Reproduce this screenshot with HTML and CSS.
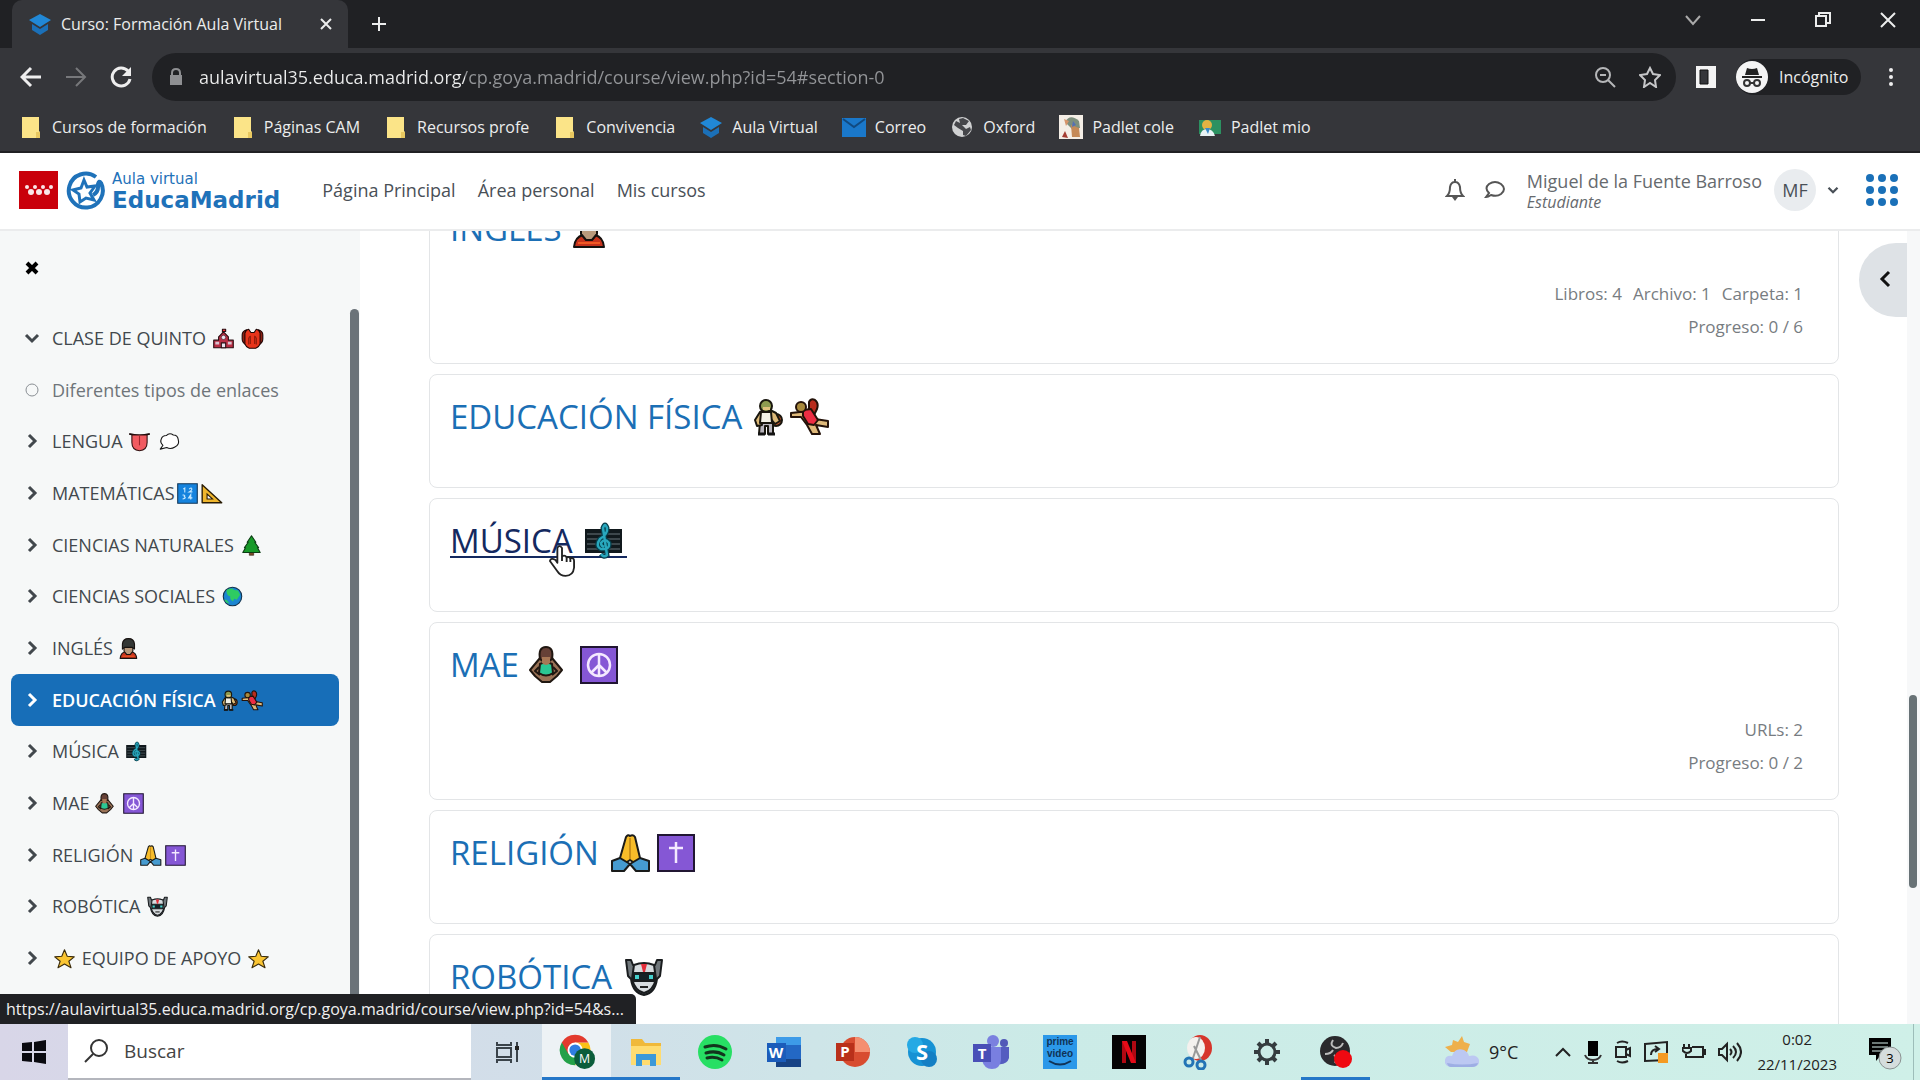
FILE: index.html
```html
<!DOCTYPE html>
<html lang="es">
<head>
<meta charset="utf-8">
<title>Curso: Formación Aula Virtual</title>
<link rel="stylesheet" href="styles.css">
</head>
<body>
<svg class="sprite" aria-hidden="true">
  <defs>
    <symbol id="e-school" viewBox="0 0 46 38"><g stroke="#2a0d12" stroke-width="2" stroke-linejoin="round"><path d="M5 36V22h9v-6l9-9 9 9v6h9v14z" fill="#b92f45"/><path d="M21 8V2h6v4h-5" fill="#e33"/><path d="M19 36v-9h8v9z" fill="#e8e4f0"/></g><circle cx="23" cy="17" r="4" fill="#e8e4f0" stroke="#2a0d12"/><path d="M8 25h7v5H8zm23 0h7v5h-7z" fill="#d9c2d0"/></symbol>
    <symbol id="e-bag" viewBox="0 0 46 38"><g stroke="#1e0505" stroke-width="2" stroke-linejoin="round"><path d="M4 12q0-6 8-9v28q-8-4-8-11zM42 12q0-6-8-9v28q8-4 8-11z" fill="#8f2113"/><path d="M9 9q2-6 7-7l4 6h6l4-6q5 1 7 7v20q-2 6-8 8H17q-6-2-8-8z" fill="#e8341b"/></g><path d="M16 30V19q1-4 3-4v14M30 30V19q-1-4-3-4v14" fill="none" stroke="#8c1a0b" stroke-width="2"/></symbol>
    <symbol id="e-tongue" viewBox="0 0 46 38"><path d="M4 5q19 5 38 0" fill="none" stroke="#1c0b0b" stroke-width="3"/><path d="M9 7h28v14q0 14-14 15Q9 35 9 21z" fill="#f15b61" stroke="#301010" stroke-width="2"/><path d="M23 9v17" stroke="#9d252c" stroke-width="2"/></symbol>
    <symbol id="e-balloon" viewBox="0 0 46 38"><path d="M6 33l5-7Q5 21 8 14q2-6 9-6 6-6 13-1 8 0 9 8 3 10-6 14-8 5-15 1z" fill="#fff" stroke="#171717" stroke-width="2" stroke-linejoin="round"/></symbol>
    <symbol id="e-numbers" viewBox="0 0 46 38"><path d="M5 1h36v36H5z" fill="#1583de" stroke="#143858" stroke-width="2"/><path d="M15 11l3-2v8M26 11q5-4 5 0 0 2-5 5h6M14 22q6-1 3 3 5 2-3 4M29 30v-9l-4 6h7" fill="none" stroke="#c7e9ff" stroke-width="2"/></symbol>
    <symbol id="e-ruler" viewBox="0 0 46 38"><path d="M4 3v33h36z" fill="#efb62d" stroke="#281b04" stroke-width="2.5" stroke-linejoin="round"/><path d="M13 20v9h10z" fill="#f7f9fa" stroke="#281b04" stroke-width="2"/></symbol>
    <symbol id="e-tree" viewBox="0 0 46 38"><path d="M19 30h8v7h-8z" fill="#7b4926" stroke="#24140a"/><path d="M23 1l8 12h-2l7 10h-2l5 9H7l5-9h-2l7-10h-2z" fill="#179a29" stroke="#0b3c13" stroke-width="2" stroke-linejoin="round"/></symbol>
    <symbol id="e-globe" viewBox="0 0 46 38"><circle cx="23" cy="19" r="17" fill="#1b86d1" stroke="#10314d" stroke-width="2"/><path d="M12 7q10-5 14 0l7 1 4 8-6 9-5-2-2 5q-7-4-5-9-8-2-7-12z" fill="#2ecb62"/><path d="M8 24q6 1 9 8-7-1-9-8z" fill="#2ecb62"/></symbol>
    <symbol id="e-guard" viewBox="4 0 40 38"><g stroke="#16110f" stroke-width="2" stroke-linejoin="round"><path d="M8 37q1-10 9-12h12q8 2 9 12z" fill="#c7331d"/><path d="M15 17h16v7l-5 6h-6l-5-6z" fill="#b9997b"/><path d="M12 20V11Q13 1 23 1t11 10v9l-4-3H16z" fill="#333735"/></g><path d="M12 33h22" stroke="#f15a25" stroke-width="2"/></symbol>
    <symbol id="e-ballman" viewBox="6 0 36 38"><g stroke="#19160e" stroke-width="2" stroke-linejoin="round"><circle cx="31" cy="22" r="6" fill="#c4532a"/><path d="M15 24h13v12h-5v-8h-3v8h-6z" fill="#b8b4bc"/><path d="M15 14l5-2h5l6 3 4 8-5 3-4-5v4H16v-4l1 6-5 1-2-6z" fill="#dcb978"/><path d="M16 14h10l1 11H15z" fill="#f3f1e6"/><circle cx="21" cy="8" r="6" fill="#8d9a50"/></g><path d="M18 9h7v3h-7z" fill="#e0c07c"/><path d="M13 36h7m3 0h7" stroke="#151515" stroke-width="3"/></symbol>
    <symbol id="e-handball" viewBox="0 0 46 38"><g stroke="#241209" stroke-width="2" stroke-linejoin="round"><path d="M22 12l0-8q2-4 6-2 4 3 2 9l-3 6z" fill="#b92c1d"/><path d="M4 15l9-1 8-2 7 9 13 2v6l-12-2 4 9h-8l-5-9-6-8-10 0z" fill="#dfb97a"/><path d="M16 12l8-1 7 11-4 5-6-1-5-8z" fill="#ed2d43"/><circle cx="14" cy="9" r="5" fill="#a98a3c"/></g></symbol>
    <symbol id="e-music" viewBox="0 0 46 38"><path d="M4 7h37v24H4z" fill="#11191d"/><path d="M6 12h33M6 17h33M6 22h33M6 27h33" stroke="#6a777c"/><g fill="none"><path d="M20 32q3 4 6 1L22 6q2-6 4 0 1 6-7 11-5 7 1 10 9 1 8-6-4-6-8 0 0 3 3 4" stroke="#073c49" stroke-width="5"/><path d="M20 32q3 4 6 1L22 6q2-6 4 0 1 6-7 11-5 7 1 10 9 1 8-6-4-6-8 0 0 3 3 4" stroke="#28a7bd" stroke-width="2.5"/></g></symbol>
    <symbol id="e-lotus" viewBox="4 0 40 38"><g stroke="#201711" stroke-width="2" stroke-linejoin="round"><path d="M17 12h12l10 12-5 6-7 6h-8l-7-6-5-6z" fill="#9a7256"/><path d="M17 18q6-3 12 0l1 9q-7 5-14 0z" fill="#2ac793"/><path d="M16 21l-4 4 5 4M30 21l4 4-5 4" fill="none"/><path d="M17 13q-2-12 6-12t6 12q-6 6-12 0z" fill="#664137"/></g><path d="M19 11h8v6q-4 4-8 0z" fill="#a77755"/></symbol>
    <symbol id="e-peace" viewBox="0 0 46 38"><path d="M5 1h36v36H5z" fill="#8557d5" stroke="#211633" stroke-width="2"/><g fill="none" stroke="#f4e9ff" stroke-width="2.5"><circle cx="23" cy="19" r="11"/><path d="M23 8v22m0-11l-8 8m8-8l8 8"/></g></symbol>
    <symbol id="e-pray" viewBox="0 0 46 38"><g stroke="#1a1b1a" stroke-width="2" stroke-linejoin="round"><path d="M19 3q2-3 4-1 3-2 5 1l5 21-4 6-6-4-6 4-4-6z" fill="#f7bc29"/><path d="M5 27l8-3 10 6-6 7H5zM42 27l-9-3-10 6 6 7h13z" fill="#469bd0"/></g><path d="M23 4v21" stroke="#c98f18" stroke-width="2"/></symbol>
    <symbol id="e-cross" viewBox="0 0 46 38"><path d="M5 1h36v36H5z" fill="#8557d5" stroke="#211633" stroke-width="2"/><path d="M23 8v21M16 14h14" stroke="#f4e9ff" stroke-width="2.5"/></symbol>
    <symbol id="e-robot" viewBox="0 0 46 38"><g stroke="#191c1e" stroke-width="2" stroke-linejoin="round"><path d="M5 2h5l2 5h22l2-5h5l-2 16-3 3q-2 14-13 16-11-2-13-16l-3-3z" fill="#70777b"/><path d="M13 7q10-4 20 0l2 14q-3 12-12 14-9-2-12-14z" fill="#d7dcdf"/><path d="M13 15h20v8H13z" fill="#162227"/></g><path d="M14 17h4v4h-4zm14 0h4v4h-4z" fill="#45d1cd"/><path d="M20 6h6l-2 8h-2z" fill="#e32f3b"/><path d="M19 29h8" stroke="#222" stroke-width="2"/></symbol>
    <symbol id="e-star" viewBox="0 0 46 38"><path d="M23 3l5 12 13 1-10 8 4 12-12-7-12 7 4-12-10-8 13-1z" fill="#fac533" stroke="#3a2b0b" stroke-width="2" stroke-linejoin="round"/></symbol>
    <symbol id="i-right" viewBox="0 0 16 16"><path d="M5 2l6 6-6 6" fill="none" stroke="currentColor" stroke-width="3"/></symbol>
    <symbol id="i-down" viewBox="0 0 16 16"><path d="M2 5l6 6 6-6" fill="none" stroke="currentColor" stroke-width="3"/></symbol>
    <symbol id="i-cap" viewBox="0 0 24 24"><path d="M1 8l11-6 11 6-11 7z" fill="#2188d6"/><path d="M4 12l8 5 8-5v6l-8 5-8-5z" fill="#1b70b8"/></symbol>
    <symbol id="i-folder" viewBox="0 0 24 24"><path d="M3 2h17v14l1 1v6H3z" fill="#fbe488"/><path d="M17 23v-6h4v6z" fill="#e8c860"/></symbol>
  </defs>
</svg>

<header class="browser">
  <div class="tabstrip">
    <div class="tab">
      <svg class="ico24"><use href="#i-cap"/></svg>
      <span class="tab-title">Curso: Formación Aula Virtual</span>
      <button class="tab-close" aria-label="Cerrar pestaña"><svg width="12" height="12"><path d="M1 1l10 10M11 1L1 11" stroke="currentColor" stroke-width="2"/></svg></button>
    </div>
    <button class="new-tab" aria-label="Nueva pestaña"><svg width="16" height="16"><path d="M8 1v14M1 8h14" stroke="currentColor" stroke-width="2"/></svg></button>
    <div class="window-controls">
      <button aria-label="Buscar pestañas"><svg width="16" height="12" fill="none"><path d="M1 2l7 8 7-8" stroke="#aaa" stroke-width="2"/></svg></button>
      <button aria-label="Minimizar"><svg width="14" height="12"><path d="M0 6h14" stroke="currentColor" stroke-width="2"/></svg></button>
      <button aria-label="Restaurar"><svg width="16" height="16" fill="none"><path d="M1 4h10v10H1zM4 4V1h11v10h-4" stroke="currentColor" stroke-width="2"/></svg></button>
      <button aria-label="Cerrar"><svg width="16" height="16"><path d="M1 1l14 14M15 1L1 15" stroke="currentColor" stroke-width="2"/></svg></button>
    </div>
  </div>
  <div class="toolbar">
    <button class="tool" aria-label="Atrás"><svg width="22" height="22" fill="none" stroke="#eee" stroke-width="3"><path d="M21 11H3M11 2l-9 9 9 9"/></svg></button>
    <button class="tool" aria-label="Adelante"><svg width="22" height="22" fill="none" stroke="#77787b" stroke-width="2"><path d="M1 11h18M11 2l9 9-9 9"/></svg></button>
    <button class="tool" aria-label="Recargar"><svg width="22" height="22" fill="none" stroke="#eee" stroke-width="3"><path d="M18 5a9 9 0 1 0 2 8"/><path d="M21 1v9h-9z" fill="#eee" stroke="none"/></svg></button>
    <div class="omnibox">
      <svg width="14" height="18"><path d="M1 7h12v10H1z" fill="#8e8f92"/><path d="M3 8V5q0-4 4-4t4 4v3" fill="none" stroke="#8e8f92" stroke-width="2"/></svg>
      <input class="url" type="text" aria-label="Dirección" value="aulavirtual35.educa.madrid.org/cp.goya.madrid/course/view.php?id=54#section-0">
      <button aria-label="Zoom"><svg width="22" height="22" fill="none" stroke="#b5b6b8" stroke-width="2"><circle cx="9" cy="9" r="7"/><path d="M14 14l7 7M6 9h6"/></svg></button>
      <button aria-label="Añadir a marcadores"><svg width="22" height="22" fill="none" stroke="#c6c7c9" stroke-width="2"><path d="M11 2l3 6 7 1-5 5 1 7-6-4-6 4 1-7-5-5 7-1z"/></svg></button>
    </div>
    <button class="side-panel" aria-label="Panel lateral"><svg width="20" height="22"><path d="M0 0h20v22H0z" fill="#f4f4f4"/><path d="M4 4h8v14H4z" fill="#35363a" stroke="#111" stroke-width="1"/></svg></button>
    <button class="incognito"><svg width="32" height="32"><circle cx="16" cy="16" r="16" fill="#f4f4f4"/><path d="M11 7q5 2 10 0l2 7H9zM6 15h20v2H6z" fill="#222"/><g fill="none" stroke="#333" stroke-width="2"><circle cx="11" cy="22" r="3"/><circle cx="21" cy="22" r="3"/><path d="M14 22h4"/></g></svg><span>Incógnito</span></button>
    <button class="kebab" aria-label="Menú"><svg width="6" height="20" fill="#eee"><circle cx="3" cy="3" r="2"/><circle cx="3" cy="10" r="2"/><circle cx="3" cy="17" r="2"/></svg></button>
  </div>
  <nav class="bookmarks" aria-label="Marcadores">
    <a href="#"><svg class="ico24"><use href="#i-folder"/></svg>Cursos de formación</a>
    <a href="#"><svg class="ico24"><use href="#i-folder"/></svg>Páginas CAM</a>
    <a href="#"><svg class="ico24"><use href="#i-folder"/></svg>Recursos profe</a>
    <a href="#"><svg class="ico24"><use href="#i-folder"/></svg>Convivencia</a>
    <a href="#"><svg class="ico24"><use href="#i-cap"/></svg>Aula Virtual</a>
    <a href="#"><svg class="ico24" viewBox="0 0 24 24"><path d="M0 3h24v19H0z" fill="#1a78ca"/><path d="M1 4l11 8 11-8" fill="none" stroke="#114a80" stroke-width="2"/></svg>Correo</a>
    <a href="#"><svg class="ico24" viewBox="0 0 24 24"><circle cx="12" cy="12" r="10" fill="#d0d1d2"/><path d="M9 4l4-1 6 3-3 4h-4l4 4 4-2 1 3-5 6-3-1v-4l-5-3-4-3 2-4 4 2z" fill="#45464a"/></svg>Oxford</a>
    <a href="#"><svg class="ico24" viewBox="0 0 24 24"><path d="M0 0h24v24H0z" fill="#f4eee6"/><path d="M6 7q5-9 14-1l1 7-8 1z" fill="#7d8f7d"/><path d="M5 4l5 2-3 5z" fill="#d6956a"/><path d="M12 10l8 3 1 9h-8z" fill="#c58a58"/><path d="M3 22l3-6 3 7z" fill="#a43d32"/><path d="M14 6l3 4-4 2z" fill="#5570b5"/></svg>Padlet cole</a>
    <a href="#"><svg class="ico24" viewBox="0 0 24 24"><path d="M1 5h22v14H1z" fill="#2c9161"/><circle cx="9" cy="10" r="5" fill="#e2b343"/><path d="M2 21q1-7 7-7t8 7z" fill="#e9f2f4"/><path d="M7 13h5l-2 6z" fill="#3989c9"/></svg>Padlet mio</a>
  </nav>
</header>

<header class="site-header">
  <a class="brand" href="#" aria-label="Aula virtual EducaMadrid">
    <svg width="39" height="38"><path d="M0 0h39v38H0z" fill="#c9000b"/><g fill="#fff" opacity=".9"><circle cx="8" cy="16" r="2"/><circle cx="16" cy="16" r="2"/><circle cx="24" cy="16" r="2"/><circle cx="32" cy="16" r="2"/><circle cx="12" cy="21" r="3"/><circle cx="20" cy="21" r="3"/><circle cx="28" cy="21" r="3"/></g></svg>
    <svg width="42" height="40" fill="none" stroke="#1f72b9" stroke-width="4"><path d="M32 7a17 17 0 1 0 5 6q-2-3-3 1 1 8-5 11"/><path d="M20 10l3 7 8-1-5 7 4 7-8-2-6 4-1-8-6-4 8-2z" stroke-width="3"/></svg>
    <span class="brand-text"><span>Aula virtual</span><strong>EducaMadrid</strong></span>
  </a>
  <nav class="site-nav"><a href="#">Página Principal</a><a href="#">Área personal</a><a href="#">Mis cursos</a></nav>
  <div class="user-area">
    <button class="head-btn" aria-label="Notificaciones"><svg width="20" height="22" fill="none" stroke="#555" stroke-width="2"><path d="M2 17q3-3 3-9 1-5 5-5t5 5q0 6 3 9zM10 3V0"/><path d="M7 18h6l-3 4z" fill="#555" stroke="none"/></svg></button>
    <button class="head-btn" aria-label="Mensajes"><svg width="22" height="20" fill="none" stroke="#555" stroke-width="2"><path d="M2 17l3-4q-5-5 0-9 6-4 12 0 6 5 0 10-4 3-10 1-3 2-5 2z"/></svg></button>
    <div class="user"><span>Miguel de la Fuente Barroso</span><em>Estudiante</em></div>
    <button class="avatar">MF</button>
    <svg class="caret" width="12" height="12"><use href="#i-down"/></svg>
    <button class="apps" aria-label="Aplicaciones"><svg width="32" height="34" fill="#1a70b8"><circle cx="4" cy="5" r="4"/><circle cx="16" cy="5" r="4"/><circle cx="28" cy="5" r="4"/><circle cx="4" cy="17" r="4"/><circle cx="16" cy="17" r="4"/><circle cx="28" cy="17" r="4"/><circle cx="4" cy="29" r="4"/><circle cx="16" cy="29" r="4"/><circle cx="28" cy="29" r="4"/></svg></button>
  </div>
</header>

<div class="page">
  <aside class="sidebar">
    <button class="drawer-close" aria-label="Cerrar índice"><svg width="14" height="14"><path d="M2 2l10 10M12 2L2 12" stroke="#000" stroke-width="4"/></svg></button>
    <ul class="index">
      <li><a href="#"><svg class="chev"><use href="#i-down"/></svg><span>CLASE DE QUINTO <svg class="emoji"><use href="#e-school"/></svg> <svg class="emoji"><use href="#e-bag"/></svg></span></a></li>
      <li><a class="light" href="#"><svg class="chev" viewBox="0 0 16 16"><circle cx="8" cy="8" r="6" fill="none" stroke="#8a8f94"/></svg><span>Diferentes tipos de enlaces</span></a></li>
      <li><a href="#"><svg class="chev"><use href="#i-right"/></svg><span>LENGUA <svg class="emoji"><use href="#e-tongue"/></svg> <svg class="emoji"><use href="#e-balloon"/></svg></span></a></li>
      <li><a href="#"><svg class="chev"><use href="#i-right"/></svg><span>MATEMÁTICAS<svg class="emoji"><use href="#e-numbers"/></svg><svg class="emoji"><use href="#e-ruler"/></svg></span></a></li>
      <li><a href="#"><svg class="chev"><use href="#i-right"/></svg><span>CIENCIAS NATURALES <svg class="emoji"><use href="#e-tree"/></svg></span></a></li>
      <li><a href="#"><svg class="chev"><use href="#i-right"/></svg><span>CIENCIAS SOCIALES <svg class="emoji"><use href="#e-globe"/></svg></span></a></li>
      <li><a href="#"><svg class="chev"><use href="#i-right"/></svg><span>INGLÉS <svg class="emoji medium"><use href="#e-guard"/></svg></span></a></li>
      <li><a class="active" href="#"><svg class="chev"><use href="#i-right"/></svg><span>EDUCACIÓN FÍSICA <svg class="emoji narrow"><use href="#e-ballman"/></svg><svg class="emoji"><use href="#e-handball"/></svg></span></a></li>
      <li><a href="#"><svg class="chev"><use href="#i-right"/></svg><span>MÚSICA <svg class="emoji"><use href="#e-music"/></svg></span></a></li>
      <li><a href="#"><svg class="chev"><use href="#i-right"/></svg><span>MAE <svg class="emoji medium"><use href="#e-lotus"/></svg> <svg class="emoji"><use href="#e-peace"/></svg></span></a></li>
      <li><a href="#"><svg class="chev"><use href="#i-right"/></svg><span>RELIGIÓN <svg class="emoji"><use href="#e-pray"/></svg><svg class="emoji"><use href="#e-cross"/></svg></span></a></li>
      <li><a href="#"><svg class="chev"><use href="#i-right"/></svg><span>ROBÓTICA <svg class="emoji"><use href="#e-robot"/></svg></span></a></li>
      <li><a href="#"><svg class="chev"><use href="#i-right"/></svg><span><svg class="emoji"><use href="#e-star"/></svg> EQUIPO DE APOYO <svg class="emoji"><use href="#e-star"/></svg></span></a></li>
    </ul>
    <div class="sidebar-thumb"></div>
  </aside>

  <main class="course">
    <section class="card">
      <h3><a href="#">INGLÉS <svg class="emoji medium"><use href="#e-guard"/></svg></a></h3>
      <div class="meta"><p><span>Libros: 4</span><span>Archivo: 1</span><span>Carpeta: 1</span></p><p>Progreso: 0 / 6</p></div>
    </section>
    <section class="card"><h3><a href="#">EDUCACIÓN FÍSICA <svg class="emoji narrow"><use href="#e-ballman"/></svg><svg class="emoji"><use href="#e-handball"/></svg></a></h3></section>
    <section class="card"><h3><a class="hovered" href="#">MÚSICA <svg class="emoji"><use href="#e-music"/></svg></a>
      <svg class="pointer" width="26" height="34" viewBox="0 0 28 36"><path d="M9 20V4q2-4 5 0v9q3-2 5 1 3-1 4 1 4-1 4 3v7q-1 9-9 9-6 0-9-5l-8-11q1-4 6-1z" fill="#fff" stroke="#222" stroke-width="2" stroke-linejoin="round"/><path d="M14 13v5m5-4v5m4-4v4" stroke="#222" stroke-width="2"/></svg></h3></section>
    <section class="card">
      <h3><a href="#">MAE <svg class="emoji medium"><use href="#e-lotus"/></svg> <svg class="emoji"><use href="#e-peace"/></svg></a></h3>
      <div class="meta"><p><span>URLs: 2</span></p><p>Progreso: 0 / 2</p></div>
    </section>
    <section class="card"><h3><a href="#">RELIGIÓN <svg class="emoji"><use href="#e-pray"/></svg><svg class="emoji"><use href="#e-cross"/></svg></a></h3></section>
    <section class="card"><h3><a href="#">ROBÓTICA <svg class="emoji"><use href="#e-robot"/></svg></a></h3></section>
  </main>

  <div class="blocks"><button class="drawer-open" aria-label="Abrir bloques"><svg width="14" height="18" fill="none"><path d="M11 2L4 9l7 7" stroke="#111" stroke-width="3"/></svg></button></div>
  <div class="page-scroll"><div class="page-thumb"></div></div>
  <div class="status">https://aulavirtual35.educa.madrid.org/cp.goya.madrid/course/view.php?id=54&amp;s...</div>
</div>

<footer class="taskbar">
  <button class="start" aria-label="Inicio"><svg width="24" height="24"><path d="M0 3l10-1v9H0zM12 2l12-2v11H12zM0 13h10v9L0 21zM12 13h12v11l-12-2z" fill="#0a0a10"/></svg></button>
  <label class="search"><svg width="24" height="24" fill="none" stroke="#333" stroke-width="2"><circle cx="15" cy="9" r="8"/><path d="M9 15l-8 8"/></svg><input type="text" placeholder="Buscar" aria-label="Buscar"></label>
  <div class="apps-row">
    <button aria-label="Vista de tareas"><svg width="26" height="24" fill="none" stroke="#3a434a" stroke-width="2"><path d="M2 2v3h14V2M2 8h14v9H2zM2 23v-3h14v3M22 2v20"/><path d="M20 6h4v4h-4z" fill="#222" stroke="none"/></svg></button>
    <button class="current" aria-label="Chrome"><svg width="38" height="38" viewBox="0 0 40 40"><path d="M18 18L4 10a16 16 0 0 0 14 24l7-12z" fill="#24a148"/><path d="M18 34a16 16 0 0 0 14-24H18l7 12z" fill="#fbc116"/><path d="M18 10h14a16 16 0 0 0-28 0l7 12z" fill="#e33b2e"/><circle cx="18" cy="18" r="8" fill="#fff"/><circle cx="18" cy="18" r="6" fill="#2f7de1"/><circle cx="28" cy="27" r="11" fill="#0b5d3b"/><text x="28" y="32" text-anchor="middle" font-family="Open Sans, sans-serif" font-size="13" fill="#fff">M</text></svg></button>
    <button class="open" aria-label="Explorador"><svg width="32" height="30"><path d="M1 2h11l3 4h16v22H1z" fill="#f0b93a"/><path d="M1 9h30v19H1z" fill="#ffdc70"/><path d="M6 17h20v12h-6v-6h-8v6H6z" fill="#3c99d8"/></svg></button>
    <button aria-label="Spotify"><svg width="34" height="34"><circle cx="17" cy="17" r="17" fill="#27df64"/><path d="M7 12q11-4 21 2M8 18q10-3 18 2M9 23q8-2 15 2" fill="none" stroke="#12351d" stroke-width="3" stroke-linecap="round"/></svg></button>
    <button aria-label="Word"><svg width="34" height="30"><path d="M9 0h25v30H9z" fill="#2368c4"/><path d="M9 0h25v8H9z" fill="#3d9be8"/><path d="M9 22h25v8H9z" fill="#174385"/><path d="M0 6h19v19H0z" fill="#1b5cba"/><text x="9" y="21" text-anchor="middle" font-family="Open Sans, sans-serif" font-weight="700" font-size="15" fill="#fff">W</text></svg></button>
    <button aria-label="PowerPoint"><svg width="34" height="32"><circle cx="19" cy="16" r="15" fill="#d84c30"/><path d="M19 1a15 15 0 0 1 15 15H19z" fill="#f58f70"/><path d="M0 7h18v18H0z" fill="#b9301a"/><text x="9" y="21" text-anchor="middle" font-family="Open Sans, sans-serif" font-weight="700" font-size="15" fill="#fff">P</text></svg></button>
    <button aria-label="Skype"><svg width="32" height="32"><circle cx="16" cy="16" r="14" fill="#1692d4"/><circle cx="9" cy="9" r="8" fill="#25a9e4"/><circle cx="23" cy="23" r="8" fill="#147fc4"/><text x="16" y="24" text-anchor="middle" font-family="Open Sans, sans-serif" font-weight="700" font-size="22" fill="#fff">S</text></svg></button>
    <button aria-label="Teams"><svg width="36" height="34"><circle cx="20" cy="6" r="6" fill="#7a80df"/><circle cx="31" cy="8" r="4" fill="#5159b8"/><path d="M23 12h13v11q-2 7-11 6z" fill="#555dc0"/><path d="M9 12h19v13q-1 9-9 9T9 25z" fill="#797fe0"/><path d="M0 9h18v18H0z" fill="#494fb7"/><text x="9" y="24" text-anchor="middle" font-family="Open Sans, sans-serif" font-weight="700" font-size="15" fill="#fff">T</text></svg></button>
    <button aria-label="Prime Video"><svg width="34" height="34"><path d="M0 0h34v34H0z" fill="#2b98e9"/><g font-family="Liberation Sans, sans-serif" font-size="10" font-weight="700" text-anchor="middle" fill="#103356"><text x="17" y="10">prime</text><text x="17" y="22">video</text></g><path d="M6 26q11 7 22 0" fill="none" stroke="#103356" stroke-width="2"/></svg></button>
    <button aria-label="Netflix"><svg width="34" height="34"><path d="M0 0h34v34H0z" fill="#050304"/><path d="M12 6v22M22 6v22" stroke="#b00812" stroke-width="4"/><path d="M10 6h5l9 22h-5z" fill="#e50b18"/></svg></button>
    <button aria-label="Recortes"><svg width="30" height="36"><ellipse cx="17" cy="14" rx="12" ry="13" fill="#d6352b"/><ellipse cx="13" cy="14" rx="9" ry="11" fill="#f4f1ee"/><path d="M9 27L17 3M19 28L11 12" stroke="#999" stroke-width="2"/><g fill="none" stroke="#2374b5" stroke-width="3"><circle cx="6" cy="28" r="4"/><circle cx="18" cy="31" r="4"/></g></svg></button>
    <button aria-label="Configuración"><svg width="28" height="28" fill="none" stroke="#343c3f"><circle cx="14" cy="14" r="8" stroke-width="3"/><path d="M14 1v5m0 16v5M1 14h5m16 0h5M5 5l4 4m10 10l4 4M5 23l4-4M19 9l4-4" stroke-width="4"/></svg></button>
    <button class="open" aria-label="OBS"><svg width="34" height="34"><circle cx="16" cy="16" r="15" fill="#2a292c"/><path d="M14 5q-4 6 3 8 5 0 7-5M6 19q6 0 8-4M16 28q3-5-1-8" fill="none" stroke="#bbb" stroke-width="2"/><circle cx="24" cy="24" r="9" fill="#ef0911"/></svg></button>
  </div>
  <div class="tray">
    <div class="weather"><svg width="36" height="32"><path d="M18 0l2 6 6 2-3 8H7l-6-5 7-2 1-5 5 2z" fill="#eeb04b"/><path d="M7 31q-7-1-6-7 1-5 7-4 3-9 12-6 4 2 5 6 8-2 10 4 1 6-6 7z" fill="#bcc8f2"/><path d="M3 27q15 3 31 0-1 4-6 4H7q-3 0-4-4z" fill="#9daee4"/></svg><span>9°C</span></div>
    <svg width="18" height="12" fill="none"><path d="M2 10l7-7 7 7" stroke="#222" stroke-width="2"/></svg>
    <svg width="18" height="24"><path d="M4 1h10v15H4z"/><path d="M1 15q2 5 8 5t8-5M9 20v3M4 23h10" fill="none" stroke="#333" stroke-width="2"/></svg>
    <svg width="18" height="24" fill="none" stroke="#222" stroke-width="2"><path d="M2 7h10v10H2zM12 10l4-2v8l-4-2M3 3q5-3 11 0M3 21q5 3 11 0"/></svg>
    <svg width="26" height="24" fill="none" stroke="#222" stroke-width="2"><path d="M1 4l22-2v18L1 21zM7 15q0-6 7-6M11 6l4 3-4 3"/><path d="M14 13h10v10H14z" fill="#f49a22" stroke="none"/></svg>
    <svg width="24" height="20" fill="none" stroke="#222" stroke-width="2"><path d="M10 5h11v10H8M21 8h2v4h-2M2 2v4M7 2v4M0 6h9v3q-4 4-8 0zM4 10v5h5"/></svg>
    <svg width="24" height="22" fill="none" stroke="#222" stroke-width="2"><path d="M1 8h3l5-5v16l-5-5H1zM12 8q3 3 0 6M15 5q6 6 0 12M19 2q8 9 0 18"/></svg>
    <div class="clock"><span>0:02</span><span>22/11/2023</span></div>
    <button class="notices" aria-label="3 notificaciones"><svg width="34" height="36"><path d="M1 4h22v17H13l-5 6v-6H1z"/><path d="M4 9h16M4 13h16M4 17h12" stroke="#d6eeea" stroke-width="1"/><circle cx="22" cy="24" r="11" fill="#d5dddd" stroke="#8b9292"/><text x="22" y="29" text-anchor="middle" font-family="Open Sans, sans-serif" font-size="13">3</text></svg></button>
  </div>
</footer>
</body>
</html>
```
FILE: styles.css
```css
* { box-sizing: border-box; }

body {
  margin: 0;
  height: 100vh;
  display: flex;
  flex-direction: column;
  overflow: hidden;
  background: #fff;
  color: #495057;
  font-family: "Open Sans", "Noto Sans", sans-serif;
  font-size: 18px;
}

.sprite { position: absolute; width: 0; height: 0; }
svg { flex: none; }
a { color: inherit; text-decoration: none; }
button { border: 0; padding: 0; background: none; color: inherit; font: inherit; display: flex; align-items: center; justify-content: center; }
input { border: 0; padding: 0; background: none; font: inherit; outline: 0; }
.ico24 { width: 24px; height: 24px; }

/* Browser frame */
.browser { background: #35363a; color: #eceded; font-size: 16px; border-bottom: 2px solid #202124; flex: none; }
.tabstrip { display: flex; height: 48px; background: #202124; }
.tab { display: flex; align-items: center; width: 336px; margin-left: 12px; padding: 0 16px; background: #35363a; border-radius: 10px 10px 0 0; }
.tab-title { flex: 1; margin-left: 9px; white-space: nowrap; }
.new-tab { width: 62px; }
.window-controls { display: flex; margin-left: auto; height: 40px; }
.window-controls button { width: 65px; }
.toolbar { display: flex; align-items: center; height: 58px; padding-left: 8px; }
.tool { width: 45px; height: 45px; }
.omnibox { display: flex; align-items: center; flex: 1; height: 48px; margin-left: 9px; padding: 0 15px 0 17px; border-radius: 24px; background: #202124; gap: 23px; }
.url {
  flex: 1;
  margin-left: -7px;
  font-size: 18px;
  color: transparent;
  background: linear-gradient(90deg, #eceded 266px, #939598 266px);
  -webkit-background-clip: text;
  background-clip: text;
}
.side-panel { width: 60px; }
.incognito { width: 125px; height: 36px; gap: 11px; justify-content: flex-start; border-radius: 18px; background: #202124; }
.kebab { width: 59px; }
.bookmarks { display: flex; gap: 24px; height: 45px; padding: 0 19px 4px; align-items: center; }
.bookmarks a { display: flex; align-items: center; gap: 9px; white-space: nowrap; }

/* Site header */
.site-header { display: flex; align-items: center; flex: none; height: 78px; padding: 0 22px 2px 19px; border-bottom: 2px solid #ebeced; background: #fff; }
.brand { display: flex; align-items: center; gap: 6px; color: #1f72b9; }
.brand-text { display: flex; flex-direction: column; font-family: "DejaVu Sans", sans-serif; font-size: 15px; line-height: 20px; }
.brand-text strong { font-size: 23px; line-height: 22px; }
.site-nav { display: flex; gap: 22px; margin-left: 42px; }
.user-area { display: flex; align-items: center; margin-left: auto; }
.head-btn { width: 40px; height: 40px; }
.user { display: flex; flex-direction: column; margin: 0 12px; line-height: 24px; color: #666a6e; }
.user em { font-size: 16px; line-height: 18px; }
.avatar { width: 42px; height: 42px; border-radius: 50%; background: #e9ecef; }
.caret { margin: 0 27px 0 11px; }

/* Course page */
.page { position: relative; display: flex; flex: 1; min-height: 0; overflow: hidden; }
.sidebar { position: relative; flex: none; width: 360px; padding: 30px 21px 0 11px; background: #f6f8f8; }
.drawer-close { width: 42px; height: 14px; }
.index { display: grid; grid-auto-rows: 1fr; height: 672px; margin: 37px 0 0; padding: 0; list-style: none; }
.index li { display: grid; }
.index a { display: flex; align-items: center; gap: 12px; padding-left: 13px; border-radius: 8px; white-space: nowrap; color: #42484d; }
.index .light { color: #6f757a; }
.index .active { background: #176eb8; color: #fff; font-weight: 600; }
.chev { width: 16px; height: 16px; }
.emoji { width: 25px; height: 21px; vertical-align: -4px; }
.emoji.medium { width: 22px; }
.emoji.narrow { width: 20px; }
.sidebar-thumb { position: absolute; top: 78px; right: 1px; bottom: 0; width: 9px; border-radius: 5px 5px 0 0; background: #6b7379; }

.course { flex: 1; display: flex; flex-direction: column; gap: 10px; margin: -45px 20px 0 69px; }
.card { flex: none; min-height: 114px; padding: 19px 35px 20px 20px; border: 1px solid #e3e5e7; border-radius: 8px; background: #fff; }
.card h3 { position: relative; margin: 0; color: #1b6fb5; font-weight: 400; font-size: 33px; line-height: 46px; height: 46px; }
.card h3 a { display: inline-block; height: 46px; }
.card .emoji { width: 46px; height: 38px; vertical-align: -7px; }
.card .emoji.medium { width: 40px; }
.card .emoji.narrow { width: 36px; }
/* One rule runs under both the title and its icon */
.card .hovered { color: #14295f; background: linear-gradient(currentColor, currentColor) 0 38px / 100% 2px no-repeat; }
.pointer { position: absolute; left: 99px; top: 26px; }
.meta { margin-top: 25px; color: #777c81; font-size: 17px; line-height: 33px; text-align: right; }
.meta p { display: flex; justify-content: flex-end; gap: 11px; margin: 0; }

.blocks { flex: none; width: 48px; padding-top: 12px; }
.drawer-open { width: 48px; height: 74px; padding: 0 0 2px 4px; border-radius: 37px 0 0 37px; background: #dee2e6; }
.page-scroll { flex: none; width: 13px; padding: 464px 3px 0 2px; background: #f7f8f9; }
.page-thumb { height: 193px; border-radius: 4px; background: #687276; }
.status { position: absolute; left: 0; bottom: 0; padding: 0 12px 0 6px; height: 30px; line-height: 30px; border-radius: 0 5px 0 0; background: #202124; color: #f0f0f0; font-size: 16px; }

/* Taskbar */
.taskbar { display: flex; flex: none; height: 56px; background: linear-gradient(90deg, #d8d6e8, #d1dfe9 30%, #cbebe7 55%, #cff0e8); color: #222; }
.start { width: 68px; }
.search { display: flex; align-items: center; gap: 16px; width: 403px; padding-left: 16px; background: #fff; border-bottom: 2px solid #b4b6bd; }
.search input { flex: 1; min-width: 0; font-size: 19px; }
.search input::placeholder { color: #444; opacity: 1; }
.apps-row { display: flex; margin-left: 2px; }
.apps-row button { width: 69px; border-bottom: 3px solid transparent; padding-top: 3px; }
.apps-row .current { background: #edf2f5; border-color: #2577c8; }
.apps-row .open { border-color: #2577c8; }
.tray { display: flex; align-items: center; gap: 12px; margin-left: auto; }
.weather { display: flex; align-items: center; gap: 9px; margin-right: 24px; }
.clock { display: flex; flex-direction: column; align-items: center; margin: 0 7px 0 3px; font-size: 15px; line-height: 25px; }
.notices { width: 58px; height: 56px; margin-right: 6px; border-right: 1px solid #9dbdb9; }
```
